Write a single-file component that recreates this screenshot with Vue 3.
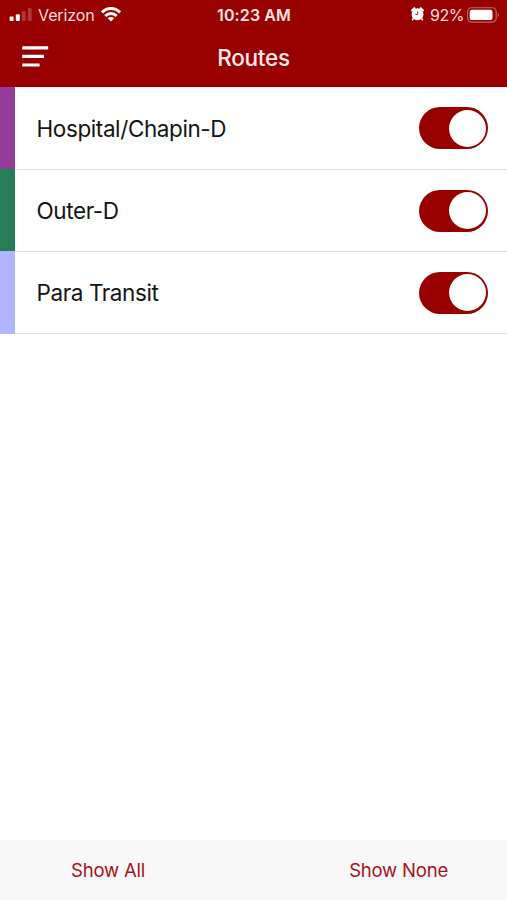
<script setup>
import { ref } from 'vue'

const routes = ref([
  { name: 'Hospital/Chapin-D', tone: 'purple', on: true },
  { name: 'Outer-D', tone: 'green', on: true },
  { name: 'Para Transit', tone: 'lavender', on: true },
])

function setAll(value) {
  routes.value.forEach((route) => { route.on = value })
}
</script>

<template>
  <div class="screen">
    <header class="header">
      <div class="status">
        <div class="carrier">
          <svg class="signal" width="23" height="14" viewBox="0 0 23 14">
            <rect x=".6" y="8.5" width="4" height="4.6" rx="1" fill="#fff" />
            <rect x="6.8" y="6.3" width="4" height="6.8" rx="1" fill="#fff" />
            <rect x="12.8" y="3.3" width="3.9" height="9.8" rx="1" fill="#fff" opacity=".22" />
            <rect x="18.8" y=".1" width="3.9" height="13" rx="1" fill="#fff" opacity=".22" />
          </svg>
          <span class="carrier-name">Verizon</span>
          <svg class="wifi" width="20" height="15" viewBox="0 0 20 15" fill="none" stroke="#fff" stroke-width="2.9">
            <path d="M1 5.4C6 .2 14 .2 19 5.4" />
            <path d="M4.3 9C7.6 5.7 12.4 5.7 15.7 9" />
            <path d="M10 14.6L6.7 11.2C8.5 9.5 11.5 9.5 13.3 11.2Z" fill="#fff" stroke="none" />
          </svg>
        </div>
        <span class="time">10:23 AM</span>
        <div class="power">
          <svg class="alarm" width="13" height="14" viewBox="0 0 14 15">
            <path d="M1.3 3.6L3.6 1.4M12.7 3.6L10.4 1.4" stroke="#fff" stroke-width="2.4" stroke-linecap="round" />
            <path d="M2.8 12.2L1.6 13.7M11.2 12.2L12.4 13.7" stroke="#fff" stroke-width="1.7" stroke-linecap="round" />
            <circle cx="7" cy="7.7" r="6.4" fill="#fff" />
            <path d="M7.2 4.8V8H4.6" stroke="#980000" stroke-width=".9" fill="none" />
          </svg>
          <span class="percent">92%</span>
          <svg class="battery" width="33" height="16" viewBox="0 0 33 16">
            <rect x=".6" y=".7" width="28.6" height="14.4" rx="4" fill="none" stroke="#fff" stroke-opacity=".42" stroke-width="1.1" />
            <rect x="2.7" y="2.7" width="22.8" height="10.4" rx="2.2" fill="#fff" />
            <path d="M30.7 5.4Q33.4 7.9 30.7 10.4Z" fill="#fff" opacity=".35" />
          </svg>
        </div>
      </div>
      <nav class="nav">
        <button class="menu" aria-label="Menu">
          <svg width="27" height="22" viewBox="0 0 27 22" fill="#fff">
            <rect x=".2" y=".2" width="26" height="3.2" rx=".5" />
            <rect x=".2" y="8.8" width="21.8" height="3.2" rx=".5" />
            <rect x=".2" y="17.4" width="17.4" height="3.2" rx=".5" />
          </svg>
        </button>
        <h1 class="title">Routes</h1>
      </nav>
    </header>
    <main class="list">
      <div v-for="route in routes" :key="route.name" class="row">
        <div class="stripe" :class="route.tone"></div>
        <div class="content">
          <span class="name">{{ route.name }}</span>
          <button class="toggle" :class="{ on: route.on }" role="switch" :aria-checked="route.on" :aria-label="route.name" @click="route.on = !route.on">
            <span class="knob"></span>
          </button>
        </div>
      </div>
    </main>
    <footer class="footer">
      <button class="action" @click="setAll(true)">Show All</button>
      <button class="action" @click="setAll(false)">Show None</button>
    </footer>
  </div>
</template>

<style>
body { margin: 0; background: #fff; }
</style>

<style scoped>
.screen {
  width: 507px;
  height: 900px;
  display: flex;
  flex-direction: column;
  background: #fff;
  font-family: Inter, "Liberation Sans", sans-serif;
  color: #141414;
}
button { border: 0; padding: 0; background: none; font: inherit; cursor: pointer; }
svg { display: block; flex: none; }
.header { height: 87px; flex: none; background: #980000; color: #fff; }
.status {
  height: 30px;
  display: grid;
  grid-template-columns: 1fr auto 1fr;
  align-items: center;
  padding: 0 8px 0 9px;
  box-sizing: border-box;
  font-size: 16px;
  line-height: 20px;
}
.carrier { display: flex; align-items: center; }
.carrier-name { margin-left: 6px; width: 56.5px; color: #ffdede; letter-spacing: -.1px; white-space: nowrap; }
.wifi { margin-left: 6px; margin-top: -1px; }
.time { font-weight: 600; font-size: 16px; letter-spacing: .1px; color: #ffe6e6; white-space: nowrap; }
.power { display: flex; align-items: center; justify-content: flex-end; margin-right: -1px; }
.alarm { margin-top: -2px; }
.percent { margin: 0 3px 0 6px; color: #ffdede; letter-spacing: -.5px; }
.nav {
  height: 55px;
  display: grid;
  grid-template-columns: 1fr auto 1fr;
  align-items: center;
  padding: 0 22px;
}
.menu { justify-self: start; padding-bottom: 2px; }
.title { margin: 0; font-size: 22.5px; line-height: 28px; font-weight: 500; letter-spacing: -.25px; color: #ffeaea; }
.list { flex: 1; }
.row { height: 82px; display: flex; }
.stripe { width: 14.5px; flex: none; }
.purple { background: #933c98; }
.green { background: #267c55; }
.lavender { background: #b0b5ff; }
.content {
  flex: 1;
  display: flex;
  align-items: center;
  justify-content: space-between;
  padding: 0 19px 0 22px;
}
.row + .row .content { border-top: 1px solid #dedede; }
.row:last-child { height: 83px; }
.row:last-child .content { border-bottom: 1px solid #dedede; }
.name { font-size: 22.5px; line-height: 28px; letter-spacing: -.4px; white-space: nowrap; padding-top: 1px; }
.toggle {
  width: 69px;
  height: 42px;
  padding: 2.5px;
  box-sizing: border-box;
  display: flex;
  border-radius: 21px;
  background: #ddd;
}
.toggle.on { background: #980000; justify-content: flex-end; }
.knob { width: 37px; height: 37px; border-radius: 50%; background: #fff; }
.footer {
  height: 60px;
  flex: none;
  display: flex;
  align-items: center;
  justify-content: space-between;
  padding: 0 59px 0 71px;
  box-sizing: border-box;
  background: #f8f8f8;
}
.action { font-size: 18.5px; line-height: 24px; letter-spacing: -.2px; color: #a51219; white-space: nowrap; }
</style>
